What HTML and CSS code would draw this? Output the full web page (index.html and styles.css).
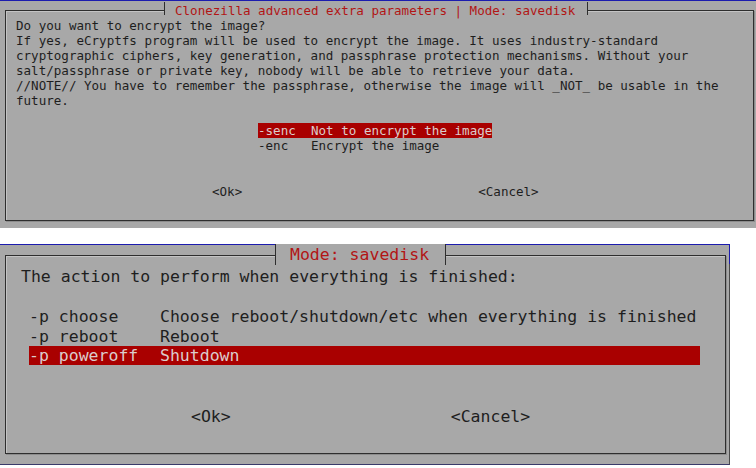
FILE: index.html
```html
<!DOCTYPE html>
<html>
<head>
<meta charset="utf-8">
<link rel="stylesheet" href="styles.css">
</head>
<body>
<div class="screen screen-top">
  <div class="dialog dialog-top">
    <div class="title title-top"><span>Clonezilla advanced extra parameters | Mode: savedisk</span></div>
    <div class="msg">
      <div class="line">Do you want to encrypt the image?</div>
      <div class="line">If yes, eCryptfs program will be used to encrypt the image. It uses industry-standard</div>
      <div class="line">cryptographic ciphers, key generation, and passphrase protection mechanisms. Without your</div>
      <div class="line">salt/passphrase or private key, nobody will be able to retrieve your data.</div>
      <div class="line">//NOTE// You have to remember the passphrase, otherwise the image will _NOT_ be usable in the</div>
      <div class="line">future.</div>
    </div>
    <div class="menu menu-top">
      <div class="item sel"><span class="tag">-senc</span><span class="desc">Not to encrypt the image</span></div>
      <div class="item"><span class="tag">-enc</span><span class="desc">Encrypt the image</span></div>
    </div>
    <div class="buttons buttons-top">
      <span class="btn">&lt;Ok&gt;</span>
      <span class="btn">&lt;Cancel&gt;</span>
    </div>
  </div>
</div>

<div class="screen screen-bottom">
  <div class="dialog dialog-bottom">
    <div class="title title-bottom"><span>Mode: savedisk</span></div>
    <div class="msg">
      <div class="line">The action to perform when everything is finished:</div>
    </div>
    <div class="menu menu-bottom">
      <div class="item"><span class="tag">-p choose</span><span class="desc">Choose reboot/shutdown/etc when everything is finished</span></div>
      <div class="item"><span class="tag">-p reboot</span><span class="desc">Reboot</span></div>
      <div class="item sel"><span class="tag">-p poweroff</span><span class="desc">Shutdown</span></div>
    </div>
    <div class="buttons buttons-bottom">
      <span class="btn">&lt;Ok&gt;</span>
      <span class="btn">&lt;Cancel&gt;</span>
    </div>
  </div>
</div>
</body>
</html>
```

FILE: styles.css
```css
* { box-sizing: border-box; }

body {
  margin: 0;
  background: #ffffff;
  font-family: "DejaVu Sans Mono", "Liberation Mono", monospace;
  color: #1e1e1e;
}

.screen {
  background: #a8a8a8;
  border-top: 1px solid #1c1cae;
  position: relative;
}

.screen-top {
  width: 756px;
  height: 228px;
  padding: 9px 0 0 5px;
  font-size: 12.55px;
}

.screen-bottom {
  width: 730px;
  height: 221px;
  margin-top: 16px;
  padding: 10px 0 0 5px;
  font-size: 16.5px;
  border-bottom: 1px solid #3a3a6a;
  border-right: 1px solid #4a4a4a;
}

.screen-bottom::after {
  content: "";
  position: absolute;
  right: -1px;
  top: -1px;
  width: 1px;
  height: 20px;
  background: #1c1cae;
}

.dialog {
  position: relative;
  border: 1px solid #2e2e2e;
  box-shadow: inset 1px 1px 0 #c4c4c4, 1px 1px 0 #8c8c8c;
}

.dialog-top {
  width: 749px;
  height: 211px;
  padding: 7px 0 0 10px;
  line-height: 15px;
}

.dialog-bottom {
  width: 721px;
  height: 199px;
  padding: 11px 0 0 15px;
  line-height: 20px;
}

.title {
  position: absolute;
  display: flex;
  align-items: center;
  background: #a8a8a8;
  border-left: 1px solid #2e2e2e;
  border-right: 1px solid #2e2e2e;
  color: #b21515;
  white-space: pre;
}

.title-top {
  left: 158px;
  top: -9px;
  height: 13px;
  padding: 3px 12px 0 10px;
}

.title-bottom {
  left: 269px;
  top: -12px;
  height: 21px;
  padding: 0 16px 0 14px;
  line-height: 20px;
}

.line { white-space: pre; }

.menu { display: flex; flex-direction: column; align-items: flex-start; }

.item { display: flex; white-space: pre; }

.item.sel {
  background: #a90000;
  color: #dccccc;
}

.menu-top { margin: 15px 0 0 242px; }
.menu-top .tag { width: 53px; }

.menu-bottom { margin: 20px 0 0 8px; }
.menu-bottom .item { width: 671px; height: 20px; }
.menu-bottom .item.sel { height: 19px; line-height: 19px; margin-top: -1px; }
.menu-bottom .tag { width: 131px; }

.buttons { display: flex; }

.buttons-top {
  margin: 31px 0 0 196px;
  gap: 236px;
}

.buttons-bottom {
  margin: 42px 0 0 170px;
  gap: 220px;
}
```
